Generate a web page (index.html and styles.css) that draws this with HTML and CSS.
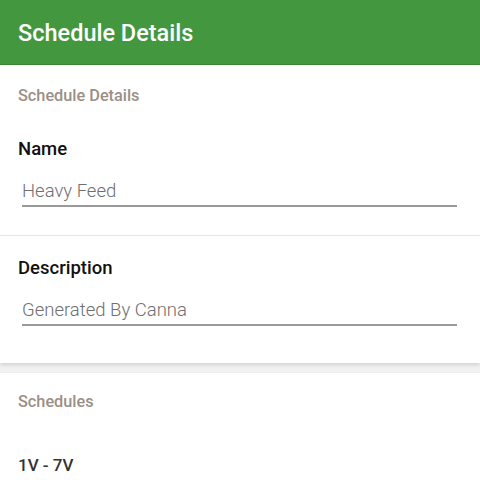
FILE: index.html
```html
<!DOCTYPE html>
<html>
<head>
<meta charset="utf-8">
<link rel="stylesheet" href="styles.css">
</head>
<body>
<header class="appbar">Schedule Details</header>
<main class="content">
  <section class="card">
    <div class="card-title">Schedule Details</div>
    <div class="field">
      <div class="field-label">Name</div>
      <div class="input">Heavy Feed</div>
    </div>
    <div class="field field-last">
      <div class="field-label">Description</div>
      <div class="input">Generated By Canna</div>
    </div>
  </section>
  <section class="card card2">
    <div class="card-title">Schedules</div>
    <div class="item">1V - 7V</div>
  </section>
</main>
</body>
</html>
```
FILE: styles.css
```css
html, body {
  margin: 0;
  padding: 0;
  background: #f2f2f2;
  font-family: Roboto, "Noto Sans", sans-serif;
}
body {
  width: 480px;
  height: 480px;
  overflow: hidden;
  display: flex;
  flex-direction: column;
}
.appbar {
  flex: none;
  height: 64px;
  background: #43983f;
  border-bottom: 1px solid #3a8a36;
  color: #fff;
  font-size: 23.5px;
  font-weight: 500;
  padding-left: 18px;
  line-height: 66px;
}
.content {
  flex: 1;
  min-height: 0;
  display: flex;
  flex-direction: column;
  gap: 10px;
}
.card {
  background: #fff;
  box-shadow: 0 2px 4px rgba(0,0,0,0.14);
}
.card-title {
  color: #9a8f86;
  font-size: 16.3px;
  font-weight: 500;
  padding: 22px 18px 0;
  line-height: 18px;
}
.field {
  padding: 34px 23px 28px 18px;
  border-bottom: 1px solid #e6e6e6;
}
.field + .field {
  padding-top: 22px;
}
.field-last {
  border-bottom: none;
  padding-bottom: 37px;
}
.field-label {
  font-size: 18.5px;
  font-weight: 500;
  color: #111;
  line-height: 20px;
}
.input {
  margin-left: 4px;
  margin-top: 20px;
  font-size: 18.5px;
  font-weight: 300;
  color: #6f6f6f;
  line-height: 24px;
  padding-bottom: 2px;
  border-bottom: 2px solid #9a9a9a;
}
.card2 {
  flex: 1;
}
.card2 .card-title {
  padding-top: 20px;
}
.item {
  padding: 44px 18px 0;
  font-size: 17px;
  font-weight: 500;
  color: #333;
}
```
